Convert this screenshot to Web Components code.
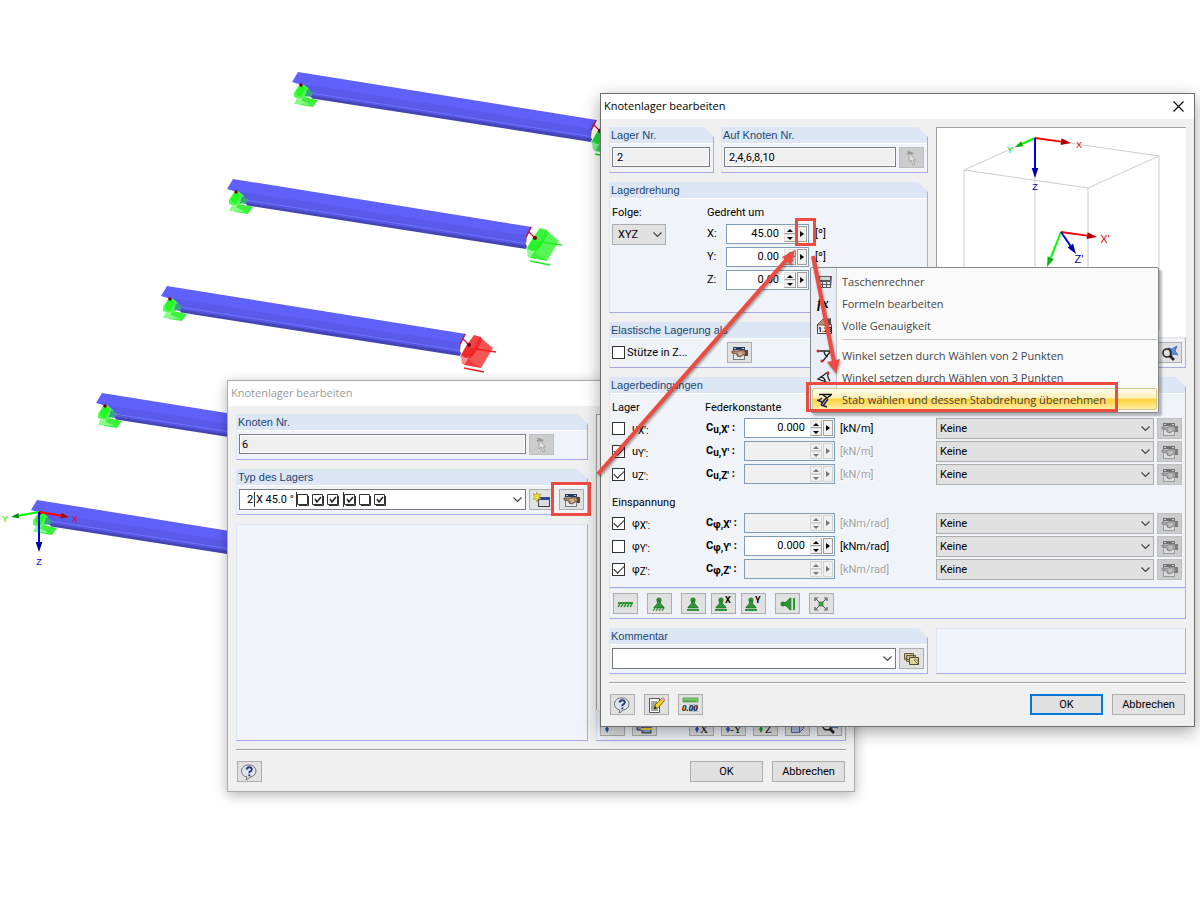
<!DOCTYPE html>
<html lang="de">
<head>
<meta charset="utf-8">
<meta name="viewport" content="width=device-width, initial-scale=1">
<title>Knotenlager bearbeiten</title>
<style>
    body {
        margin: 0;
        min-height: 100vh;
        background-color: white;
        color: black;
        font: 11px/16px Roboto, "Liberation Sans", sans-serif;
    }

    support-desktop {
        min-height: 100vh;
    }
</style>
</head>
<body>
<support-desktop></support-desktop>

<script>
const base = /*css*/`
    * {
        box-sizing: border-box;
    }

    :host([hidden]) {
        display: none;
    }

    button, input, select {
        margin: 0;
        font: inherit;
        color: inherit;
        border-radius: 0;
        outline: none;
    }

    svg {
        display: block;
    }
`

const hand = /*html*/`
    <rect x="2.5" y="2.5" width="11" height="12" fill="#e6e8ec" stroke="#777b80"/>
    <path d="M2 2h12v3H2z" fill="#273a63"/><path d="M3 3h2v1H3zM11 3h2v1h-2z" fill="#b9c6df"/>
    <path d="M1 6l6 0 3-1 4 1 1 4-3 0-3 2-3-1 0-2-5-1z" fill="#b58b66" stroke="#5c4330" stroke-width=".8"/>
    <path d="M7 8l4 0M8 10l3-1" stroke="#f1d9bf" stroke-width=".8" fill="none"/>
    <path d="M14 5h3v6h-3z" fill="#54483f"/>`

const stamp = /*html*/`
    <circle cx="8" cy="4" r="2.6" fill="#2c8a33"/>
    <path d="M7 5h2l1 3 3 3v1H3v-1l3-3z" fill="#2f9437" stroke="#1f6a27" stroke-width=".6"/>`

const beamAxis = /*html*/`<path d="M3 2.5h13M15 3l-8 6M7 3l4 3" stroke="#111" stroke-width="1.3" fill="none"/>`

const icons = {
    pick: /*html*/`
        <path d="M3 1l5 1 3 1-3 1z" fill="#777"/><path d="M4 4l4-2M5 2l5 2" stroke="#777" stroke-width="1.4"/>
        <path d="M6 3v9l2-2 2 5 2-1-2-4h3z" fill="#eee" stroke="#777" stroke-width=".8"/>`,
    hand,
    create: /*html*/`
        <rect x="5.5" y="5.5" width="11" height="9" fill="#d9dbe0" stroke="#444"/><path d="M5 5h12v3H5z" fill="#2d4b86"/>
        <path d="M4 0l1 3 3-1-2 3 2 2-3 0-1 3-1-3-3 0 2-2-2-3 3 1z" fill="#f3e52f" stroke="#8c8213" stroke-width=".5"/>`,
    help: /*html*/`
        <path d="M8 1a6.5 6 0 0 1 1 12q-1 2-4 3l1-3A6.5 6 0 0 1 8 1z" fill="#dfe5ef" stroke="#6c7076"/>
        <path d="M5.5 5.5q.5-2.500 3-2.300 2.500.2 2.300 2.300-.3 1.500-2.300 2.300v1.500" stroke="#2b3b78" stroke-width="1.9" fill="none"/>
        <circle cx="8.3" cy="11.3" r="1.1" fill="#2b3b78"/>`,
    note: /*html*/`
        <path d="M1.5 1.5h10v14h-10z" fill="#fafafa" stroke="#555"/><path d="M3 5h6M3 7h6M3 9h5M3 11h5M3 13h7" stroke="#555"/>
        <path d="M6 12l1-4 7-7 3 2-7 8z" fill="#f2d01c" stroke="#5a4a0b" stroke-width=".8"/><path d="M13 2l2-2 3 2-2 2z" fill="#e59aa8"/><path d="M6 12l1-3 2 2z" fill="#222"/>`,
    decimals: /*html*/`
        <path d="M1 1h15v4H1z" fill="#7cc870" stroke="#4f9a46" stroke-width=".8"/><path d="M3 5V3M5 5V3M7 5V3M9 5V3M11 5V3M13 5V3" stroke="#3b7b35" stroke-width=".7"/>
        <path d="M7 7h9v8H7z" fill="#b8c5de"/>
        <text x="0" y="14" font-family="Liberation Serif, serif" font-size="9" font-weight="700" font-style="italic">0.00</text>`,
    ground: /*html*/`
        <path d="M1 6h15v2H1z" fill="#2f9437"/><path d="M1 11l2-3M4 11l2-3M7 11l2-3M10 11l2-3M13 11l2-3" stroke="#2f9437" stroke-width="1.5"/>`,
    fixed: stamp + /*html*/`<path d="M2 15l2-3M5 15l2-3M8 15l2-3M11 15l2-3" stroke="#2f9437" stroke-width="1.3"/>`,
    stand: stamp + /*html*/`<path d="M2 13h12v2H2z" fill="#2f9437"/>`,
    standX: /*html*/`<g transform="translate(-2 0)">${stamp}<path d="M2 13h12v2H2z" fill="#2f9437"/></g>
        <text x="10" y="7" font-family="Roboto, sans-serif" font-size="9" font-weight="700">X</text>`,
    standY: /*html*/`<g transform="translate(-2 0)">${stamp}<path d="M2 13h12v2H2z" fill="#2f9437"/></g>
        <text x="10" y="7" font-family="Roboto, sans-serif" font-size="9" font-weight="700">Y</text>`,
    side: /*html*/`
        <circle cx="4" cy="8" r="2.5" fill="#2c8a33"/><path d="M4 7l3-1 4-4h1v12h-1l-4-4-3-1z" fill="#2f9437" stroke="#1f6a27" stroke-width=".6"/><path d="M14 2h2v12h-2z" fill="#2f9437"/>`,
    spread: /*html*/`
        <path d="M3 3l10 10M13 3L3 13" stroke="#555"/><path d="M2 5V2h3M11 2h3v3M14 11v3h-3M5 14H2v-3" stroke="#555" stroke-width="1.2" fill="none"/>
        <rect x="6" y="6" width="4" height="4" fill="#3ea446" stroke="#256c2b" stroke-width=".6"/>`,
    stack: /*html*/`
        <path d="M1.5 2.5h9v6h-9zM3.500 4.500h9v6h-9z" fill="#c9be8a" stroke="#665f3d"/><path d="M6.5 6.5h9v7h-9z" fill="#dfd49c" stroke="#554f32"/>
        <path d="M11 9h4v4z" fill="#fff8d5" stroke="#554f32" stroke-width=".7"/>`,
    find: /*html*/`
        <path d="M7 3l4 1 5-3-2 5 3 4-4-1-4 3 0-5z" fill="#5f8de0" stroke="#2a4da0" stroke-width=".7"/>
        <circle cx="6" cy="8" r="4" fill="none" stroke="#222" stroke-width="1.6"/><path d="M9 11l4 4" stroke="#222" stroke-width="2.6"/>`,
    calc: /*html*/`
        <path d="M2 2h14l-1 12H1z" fill="#575b60"/><rect x="4" y="3" width="10" height="3" fill="#cfd8cf"/>
        <path d="M3 8h3v2H3zM7 8h3v2H7zM11 8h3v2h-3zM3 11h3v2H3zM7 11h3v2H7zM11 11h3v2h-3z" fill="#e8e8e8"/>`,
    fx: /*html*/`<text x="1" y="12" font-family="Liberation Serif, serif" font-size="14" font-weight="700" font-style="italic">fx</text>`,
    exact: /*html*/`
        <path d="M1.5 6.5h14v9h-14z" fill="#f4f4f4" stroke="#444"/><path d="M1 7l6-6 5 0 3 3-3 4-5-1z" fill="#b79673" stroke="#4a3c2e" stroke-width=".7"/><path d="M11 1l4-1v6l-3 0z" fill="#4e5665"/>
        <text x="2" y="14" font-family="Roboto, sans-serif" font-size="7" font-weight="700">1.23</text>`,
    two: /*html*/`<path d="M2 3h14M14 4l-7 9M8 4q1 4 4 4" stroke="#222" stroke-width="1.3" fill="none"/><circle cx="2" cy="3" r="1.5" fill="#d22"/><circle cx="6" cy="13" r="1.5" fill="#d22"/>`,
    three: /*html*/`<path d="M12 2L2 9l11 4M5 7q4 1 4 4M12 3q-1 4 2 8" stroke="#222" stroke-width="1.3" fill="none"/><circle cx="12" cy="3" r="1.5" fill="#d22"/><circle cx="13" cy="13" r="1.5" fill="#d22"/>`,
    member: beamAxis + /*html*/`<path d="M1 8l5 2M7 14l5-7M5 13l6 2M5 13l4-6M2 9l4-3" stroke="#16246f" stroke-width="1.5" fill="none"/>`,
    axisX: /*html*/`<path d="M4 8l2 3-2 4-2-4z" fill="#3355cc"/><text x="7" y="15" font-family="Liberation Serif, serif" font-size="11">X</text>`,
    axisY: /*html*/`<path d="M3 8l2 3-2 4-2-4z" fill="#3355cc"/><text x="5" y="15" font-family="Liberation Serif, serif" font-size="11">-Y</text>`,
    axisZ: /*html*/`<path d="M4 8l2 3-2 4-2-4z" fill="#229922"/><text x="8" y="15" font-family="Liberation Serif, serif" font-size="11">Z</text>`,
    drop: /*html*/`<path d="M3 8l2 3-2 4-2-4z" fill="#3355aa"/>`,
    views: /*html*/`<path d="M1 6h8v6H1z" fill="#8ca0d8" stroke="#334"/><path d="M6 9h9v6H6z" fill="#8ca0d8" stroke="#334"/><path d="M5 10h11v2H5z" fill="#f0e020"/>`,
    cube: /*html*/`<path d="M2.5 6.5h8v8h-8zM2.500 6.500l4-4h8v8l-4 4M10.500 6.500l4-4" fill="#b9c4e8" stroke="#5566a0"/>`
}

const icon = (name) => /*html*/`<svg width="17" height="16" viewBox="0 0 17 16" aria-hidden="true">${icons[name]}</svg>`

class BaseElement extends HTMLElement {
    connectedCallback() {
        if (this.shadowRoot) return

        this.attachShadow({ mode: 'open' })
        this.shadowRoot.innerHTML = /*html*/`<style>${base}${this.styles()}</style>${this.render()}`
    }
}

class IconButton extends BaseElement {
    styles() {
        return /*css*/`
            :host {
                display: block;
                width: 25px;
                height: 21px;
            }

            button {
                width: 100%;
                height: 100%;
                padding: 0;
                display: grid;
                place-items: center;
                background-color: #e1e1e1;
                border: 1px solid #adadad;
            }

            button:disabled {
                background-color: #cccccc;
                border-color: #bfbfbf;
            }

            button:disabled svg {
                filter: grayscale(1);
                opacity: 0.6;
            }
        `
    }

    render() {
        return /*html*/`<button type="button" aria-label="${this.getAttribute('label')}" ${this.hasAttribute('disabled') ? 'disabled' : ''}>${icon(this.getAttribute('icon'))}</button>`
    }
}

class PushButton extends BaseElement {
    styles() {
        return /*css*/`
            :host {
                display: block;
                width: 73px;
                height: 21px;
            }

            button {
                width: 100%;
                height: 100%;
                padding: 0;
                background-color: #e1e1e1;
                border: 1px solid #adadad;
            }

            :host([primary]) button {
                border: 2px solid #0078d7;
            }
        `
    }

    render() {
        return /*html*/`<button type="button"><slot></slot></button>`
    }
}

class CheckBox extends BaseElement {
    styles() {
        return /*css*/`
            :host {
                display: flex;
            }

            label {
                display: flex;
                align-items: center;
                gap: 2px;
                white-space: nowrap;
            }

            :host([wide]) label {
                gap: 7px;
            }

            input {
                appearance: none;
                flex: none;
                width: 13px;
                height: 13px;
                border: 1px solid #333;
                background-color: white;
                display: grid;
                place-items: center;
            }

            input:checked::before {
                content: '';
                width: 9px;
                height: 5px;
                margin-bottom: 3px;
                border-left: 1px solid #222;
                border-bottom: 1px solid #222;
                transform: rotate(-45deg);
            }
        `
    }

    render() {
        return /*html*/`<label><input type="checkbox" ${this.hasAttribute('checked') ? 'checked' : ''}><span><slot></slot></span></label>`
    }
}

class TextField extends BaseElement {
    styles() {
        return /*css*/`
            :host {
                display: block;
                min-width: 0;
            }

            input {
                display: block;
                width: 100%;
                height: 20px;
                padding: 0 4px;
                background-color: #f0f0f0;
                border: 1px solid #7a7a7a;
                box-shadow: inset 0 0 0 1px white;
            }

            :host([tight]) input {
                padding: 0 2px;
            }
        `
    }

    render() {
        return /*html*/`<input type="text" readonly aria-label="${this.getAttribute('label')}" value="${this.getAttribute('value')}">`
    }
}

class DropDown extends BaseElement {
    styles() {
        return /*css*/`
            :host {
                display: block;
                position: relative;
                min-width: 0;
            }

            select {
                appearance: none;
                display: block;
                width: 100%;
                height: 21px;
                padding: 0 18px 0 3px;
                background-color: #e1e1e1;
                border: 1px solid #adadad;
            }

            :host([editable]) select {
                background-color: white;
                border-color: #7a7a7a;
                padding-left: 7px;
            }

            :host([small]) select {
                padding-left: 5px;
            }

            svg {
                position: absolute;
                right: 4px;
                top: 8px;
                pointer-events: none;
            }
        `
    }

    render() {
        return /*html*/`
            <select aria-label="${this.getAttribute('label')}"><option>${this.getAttribute('value') || ''}</option></select>
            <svg width="9" height="6" viewBox="0 0 9 6"><path d="M.5.5l4 4 4-4" fill="none" stroke="#444" stroke-width="1.200"/></svg>
            <slot></slot>
        `
    }
}

// number box with up/down arrows and the small menu arrow beside them
class SpinField extends BaseElement {
    styles() {
        return /*css*/`
            :host {
                display: flex;
                align-items: center;
            }

            label {
                flex: none;
                width: var(--label-width, 19px);
                font-weight: var(--label-weight, 400);
                white-space: nowrap;
            }

            .box {
                flex: 1;
                display: flex;
                gap: 1px;
                height: 20px;
                min-width: 0;
                padding: 1px;
                background-color: white;
                border: 1px solid #7f9db9;
            }

            input {
                flex: 1;
                width: 0;
                padding: 0 4px 0 0;
                border: none;
                background: none;
                text-align: right;
            }

            .steps {
                width: 12px;
                display: flex;
                flex-direction: column;
            }

            button {
                flex: 1;
                padding: 0;
                display: grid;
                place-items: center;
                background-color: #f0f0f0;
                border: 1px solid #a0a0a0;
                border-top-color: #e3e3e3;
                border-left-color: #e3e3e3;
            }

            .more {
                flex: none;
                width: 10px;
                border-color: #a0a0a0;
            }

            :host([disabled]) .box {
                background-color: #f0f0f0;
            }

            :host([disabled]) button {
                border-color: #d4d4d4;
                color: #777;
            }
        `
    }

    render() {
        const off = this.hasAttribute('disabled') ? 'disabled' : ''

        return /*html*/`
            <label for="value"><slot></slot></label>
            <div class="box">
                <input id="value" type="text" value="${this.getAttribute('value') || ''}" ${off}>
                <div class="steps">
                    <button type="button" aria-label="Erhöhen" ${off}><svg width="6" height="3" viewBox="0 0 6 3"><path d="M0 3l3-3 3 3z" fill="currentColor"/></svg></button>
                    <button type="button" aria-label="Verringern" ${off}><svg width="6" height="3" viewBox="0 0 6 3"><path d="M0 0l3 3 3-3z" fill="currentColor"/></svg></button>
                </div>
                <button class="more" type="button" aria-label="Mehr" ${off}><svg width="4" height="6" viewBox="0 0 4 6"><path d="M0 0l4 3-4 3z" fill="currentColor"/></svg></button>
            </div>
        `
    }
}

// framed group, with a heading its upper right corner is cut off
class GroupPanel extends BaseElement {
    styles() {
        return /*css*/`
            :host {
                display: block;
                background-color: #f0f4f9;
                border: 1px solid #dce6f4;
                border-right-color: #a8a8ec;
                border-bottom-color: #a8a8ec;
            }

            :host([heading]) {
                clip-path: polygon(0 0, calc(100% - 10px) 0, 100% 10px, 100% 100%, 0 100%);
            }

            h2 {
                margin: 0;
                height: 16px;
                padding: 0 1px;
                background-color: #dce6f4;
                border-bottom: 1px solid white;
                color: #1d4770;
                font: 11px/14px "Liberation Sans", Arial, sans-serif;
            }

            div {
                padding: 3px 3px 4px 2px;
            }
        `
    }

    render() {
        const heading = this.getAttribute('heading')
        return /*html*/`${heading ? `<h2>${heading}</h2>` : ''}<div><slot></slot></div>`
    }
}

class DialogWindow extends BaseElement {
    styles() {
        return /*css*/`
            :host {
                display: block;
                background-color: #f0f0f0;
                border: 1px solid #6e6e6e;
                box-shadow: 0 5px 16px rgba(0, 0, 0, 0.35);
            }

            :host([inactive]) {
                border-color: #aaa;
                box-shadow: 0 3px 12px rgba(0, 0, 0, 0.3);
            }

            header {
                display: flex;
                justify-content: space-between;
                align-items: center;
                height: 25px;
                padding: 0 10px 1px 3px;
                background-color: white;
            }

            h1 {
                margin: 0;
                font: 11px/16px "Open Sans", "Noto Sans", sans-serif;
            }

            :host([inactive]) h1 {
                color: #999;
            }

            header button {
                padding: 0;
                border: none;
                background: none;
            }

            main {
                padding: 8px;
            }

            footer {
                margin: 0 8px;
                padding: 11px 1px;
                border-top: 1px solid #a0a0a0;
                box-shadow: inset 0 1px white;
                display: flex;
                justify-content: space-between;
            }

            :host([inactive]) footer {
                padding-bottom: 9px;
            }

            footer div {
                display: flex;
                gap: 9px;
            }
        `
    }

    render() {
        return /*html*/`
            <header>
                <h1>${this.getAttribute('heading')}</h1>
                <button type="button" aria-label="Schließen"><svg width="11" height="11" viewBox="0 0 11 11"><path d="M.5.5l10 10M10.500.5l-10 10" stroke="black" stroke-width="1.1"/></svg></button>
            </header>
            <main><slot></slot></main>
            <footer>
                <div><slot name="tools"></slot></div>
                <div>
                    <push-button ${this.hasAttribute('inactive') ? '' : 'primary'}>OK</push-button>
                    <push-button>Abbrechen</push-button>
                </div>
            </footer>
        `
    }
}

const arrow = (x1, y1, x2, y2, color, tip, size = 10) => {
    const a = Math.atan2(y2 - y1, x2 - x1)
    const bx = x2 - Math.cos(a) * size
    const by = y2 - Math.sin(a) * size
    const dx = Math.sin(a) * size / 3
    const dy = Math.cos(a) * size / 3

    return /*html*/`
        <line x1="${x1}" y1="${y1}" x2="${bx}" y2="${by}" stroke="${color}" stroke-width="2"/>
        <polygon points="${x2},${y2} ${bx + dx},${by - dy} ${bx - dx},${by + dy}" fill="${tip}"/>
    `
}

const axisText = (x, y, color, text, size = 9) => /*html*/`<text x="${x}" y="${y}" fill="${color}" font-family="Liberation Sans, sans-serif" font-size="${size}" text-anchor="middle">${text}</text>`

class AxisPreview extends BaseElement {
    styles() {
        return /*css*/`
            :host {
                display: block;
                min-height: 0;
                background-color: white;
                border-top: 1px solid #a0a0a0;
                border-left: 1px solid #a0a0a0;
            }

            svg {
                margin: -1px;
                width: 250px;
                height: 210px;
            }
        `
    }

    render() {
        return /*html*/`
            <svg viewBox="0 0 250 210" aria-hidden="true">
                <path d="M28 43L99 11 223 29 152 61zM28 43v160M99 11v192M223 29v174M152 61v142" fill="none" stroke="#ccc"/>
                ${arrow(99, 11, 135, 16, '#f00', '#b00000')}
                ${arrow(99, 11, 79, 20, '#0f0', '#00a800', 8)}
                ${arrow(99, 11, 99, 51, '#00f', '#0000a8')}
                ${arrow(125, 105, 161, 110, '#f00', '#b00000')}
                ${arrow(125, 105, 111, 140, '#0f0', '#00b800')}
                ${arrow(125, 105, 140, 127, '#00f', '#0000a8')}
                ${axisText(143, 21, '#d00', 'X')}
                ${axisText(74, 26, '#0d0', 'Y')}
                ${axisText(99, 63, '#00a', 'Z')}
                ${axisText(169, 116, '#d00', "X'", 11)}
                ${axisText(143, 136, '#00a', "Z'", 11)}
            </svg>
        `
    }
}

class SupportRow extends BaseElement {
    styles() {
        return /*css*/`
            :host {
                display: grid;
                grid-template-columns: 94px 129px 97px 1fr 25px;
                align-items: center;
                height: 21px;
            }

            spin-field {
                --label-width: 38px;
                --label-weight: 700;
                height: 20px;
                align-self: start;
            }

            sub {
                font-size: 10px;
                line-height: 10px;
                vertical-align: -2px;
            }

            .unit {
                padding-left: 5px;
            }

            .off {
                color: #a0a0a0;
                text-shadow: 1px 1px white;
            }

            drop-down {
                margin: 0 3px 0 4px;
            }
        `
    }

    render() {
        const symbol = this.getAttribute('symbol')
        const axis = this.getAttribute('axis')
        const value = this.getAttribute('value')

        return /*html*/`
            <check-box wide ${this.hasAttribute('checked') ? 'checked' : ''}>${symbol}<sub>${axis}':</sub></check-box>
            <spin-field ${value ? `value="${value}"` : 'disabled'}>C<sub>${symbol},${axis}'</sub> :</spin-field>
            <span class="unit ${value ? '' : 'off'}">[${this.getAttribute('unit')}]</span>
            <drop-down label="Nichtlinearität ${symbol}${axis}'" value="Keine"></drop-down>
            <icon-button icon="hand" label="Nichtlinearität bearbeiten" disabled></icon-button>
        `
    }
}

class ContextMenu extends BaseElement {
    styles() {
        return /*css*/`
            :host {
                display: block;
                padding: 2px 1px;
                border: 1px solid #868686;
                border-radius: 2px;
                background: linear-gradient(90deg, #e9eef7 25px, #c5c5c5 25px 26px, #fafafa 26px);
                box-shadow: 3px 3px 2px rgba(0, 0, 0, 0.25);
                color: #444;
                font: 11px/20px "Open Sans", "Noto Sans", sans-serif;
            }

            button {
                display: flex;
                align-items: center;
                gap: 9px;
                width: 100%;
                height: 22px;
                padding: 1px 3px 0;
                border: 1px solid transparent;
                background: none;
                white-space: nowrap;
            }

            .active {
                border-color: #d2c48a;
                border-radius: 2px;
                background: linear-gradient(#fffcee, #fdefb6 45%, #fdd340 52%, #fee073 80%, #fff0a8);
            }

            hr {
                margin: 3px 0 4px 31px;
                border: none;
                border-top: 1px solid #c5c5c5;
            }
        `
    }

    render() {
        const item = ([name, text], active) => /*html*/`<button type="button" role="menuitem" class="${active ? 'active' : ''}">${icon(name)}${text}</button>`

        return /*html*/`
            ${item(['calc', 'Taschenrechner'])}
            ${item(['fx', 'Formeln bearbeiten'])}
            ${item(['exact', 'Volle Genauigkeit'])}
            <hr>
            ${item(['two', 'Winkel setzen durch Wählen von 2 Punkten'])}
            ${item(['three', 'Winkel setzen durch Wählen von 3 Punkten'])}
            ${item(['member', 'Stab wählen und dessen Stabdrehung übernehmen'], true)}
        `
    }
}

class BeamScene extends BaseElement {
    styles() {
        return /*css*/`
            :host {
                display: block;
            }

            svg {
                width: 100%;
            }
        `
    }

    endSupport(color) {
        return /*html*/`
            <g fill="${color}">
                <path d="M307 49l7 2 1 4-9 15-7 2-5-3 5-9z" opacity=".85"/>
                <path d="M313 51l13 11-12 20-17-3 12-19z" opacity=".75"/>
                <path d="M299 61l10 2-6 10-10-2z" opacity=".6"/>
                <path d="M294 71l7 2 13 9-19-4z" opacity=".5"/>
            </g>
            <path d="M309 63l20 3M297 82l20 4" stroke="${color}" stroke-width="1.300"/>
            <path d="M298 48l-5 10M296 53l6 6" stroke="#c8102e" stroke-width="1.200"/>
            <circle cx="302" cy="59" r="2" fill="#7a0010"/>
        `
    }

    beam(x, y, color) {
        return /*html*/`
            <g transform="translate(${x} ${y})">
                <path d="M0 30l6-5 14 3-5 7-13-2z" fill="#3cf03c"/>
                <path d="M-1 26l13 7-16-1z" fill="#86fb86"/>
                <path d="M0 0L299 48 294 58 4 13-6 10z" fill="#6060fa"/>
                <path d="M4 12L294 57 293 65 11 21z" fill="#5959ea"/>
                <path d="M9 20L293 64 293 66 9 22z" fill="#7373fb"/>
                <path d="M9 21L293 65 294 68 12 24z" fill="#5555e4"/>
                <path d="M12 23.500L294 67 293 70 14 26.500z" fill="#4444b4"/>
                <path d="M1 13l4-1 6 5 1 4-4 4-6 2-6-2 0-4z" fill="#50fa50"/>
                <path d="M3 13l5 3-5 9-4-2-1-4z" fill="#22f822"/>
                <path d="M9 17l6 3-2 5-6-1z" fill="#3aa08a"/>
                <circle cx="3" cy="13" r="1.800" fill="#7a0010"/>
                ${this.endSupport(color)}
            </g>
        `
    }

    render() {
        return /*html*/`
            <svg viewBox="0 0 1200 900" aria-hidden="true">
                ${this.beam(298, 72, '#11d92a')}
                ${this.beam(233, 179, '#1df21d')}
                ${this.beam(167, 286, '#f01e1e')}
                ${this.beam(102, 393, '#1df21d')}
                ${this.beam(37, 500, '#1df21d')}
                ${arrow(39, 512, 69, 517, '#f00', '#b00000', 8)}
                ${arrow(39, 512, 11, 517, '#0f0', '#009000', 8)}
                ${arrow(39, 512, 39, 552, '#00f', '#0000a8')}
                ${axisText(75, 522, '#e00030', 'X')}
                ${axisText(5, 522, '#0e0', 'Y')}
                ${axisText(39, 565, '#00f', 'Z')}
            </svg>
        `
    }
}

// red frames and arrows over the dialogs
class MarkLayer extends BaseElement {
    styles() {
        return /*css*/`
            :host {
                display: block;
                pointer-events: none;
            }

            svg {
                width: 100%;
            }

            .arrows {
                filter: drop-shadow(1px 2px 1px rgba(0, 0, 0, 0.35));
            }
        `
    }

    render() {
        return /*html*/`
            <svg viewBox="0 0 1200 900" aria-hidden="true">
                <g fill="none" stroke="#ec4b42" stroke-width="3">
                    <rect x="796.5" y="219.5" width="18" height="25"/>
                    <rect x="807.5" y="383.5" width="309" height="27"/>
                    <rect x="552.5" y="483.5" width="37" height="31"/>
                </g>
                <g class="arrows">
                    <path d="M598 474L787 259M813 256L834 362" stroke="#ec4b42" stroke-width="4"/>
                    <path d="M795 250l-4 15-9-8zM836 373l-9-11 13-3z" fill="#ec4b42"/>
                </g>
            </svg>
        `
    }
}

class SupportDesktop extends BaseElement {
    styles() {
        return /*css*/`
            :host {
                display: block;
                position: relative;
                overflow: hidden;
            }

            dialog-window, context-menu, mark-layer {
                position: absolute;
            }

            .node {
                top: 380px;
                left: 19%;
                right: 345px;
                margin-left: -1px;
            }

            .support {
                top: 93px;
                left: 50%;
                right: 5px;
            }

            context-menu {
                top: 267px;
                left: 67.5%;
                right: 41px;
            }

            mark-layer {
                inset: 0;
            }

            .columns {
                display: grid;
                grid-template-columns: 319fr 250fr;
                gap: 9px 8px;
            }

            .node .columns {
                grid-template-columns: 352fr 250fr;
            }

            .column {
                display: flex;
                flex-direction: column;
                gap: 9px;
                min-width: 0;
            }

            .column.joined {
                gap: 0;
            }

            .grow {
                flex: 1;
            }

            .line {
                display: flex;
                align-items: flex-start;
                gap: 3px;
            }

            .line.spaced {
                align-items: stretch;
                gap: 7px;
            }

            .narrow {
                width: 105px;
            }

            .rotation {
                display: grid;
                grid-template-columns: 95px 1fr;
                padding-top: 3px;
                min-height: 106px;
                align-items: start;
                align-content: start;
            }

            .rotation drop-down {
                width: 54px;
            }

            .bracket, .rows {
                display: grid;
                gap: 3px;
            }

            .angle {
                display: grid;
                grid-template-columns: 102px 1fr;
                align-items: center;
                gap: 6px;
            }

            .elastic {
                display: grid;
                grid-template-columns: 115px 25px;
                align-items: center;
                height: 21px;
            }

            .heads {
                display: grid;
                grid-template-columns: 93px 1fr;
                padding: 3px 0 2px;
            }

            .bearing {
                display: grid;
                gap: 2px;
            }

            .second {
                padding-top: 10px;
            }

            .last {
                padding-bottom: 3px;
            }

            .full {
                grid-column: 1 / -1;
            }

            .toolbar {
                display: flex;
                gap: 9px;
                padding: 1px 1px 0;
            }

            .toolbar div {
                display: flex;
                gap: 5px;
            }

            .views {
                display: flex;
                justify-content: space-between;
                padding: 1px 0 0 1px;
            }

            .views div {
                display: flex;
                gap: 5px;
            }

            .info {
                min-height: 217px;
            }

            .parts {
                position: absolute;
                left: 15px;
                top: 3px;
            }

            .node icon-button + icon-button {
                margin-left: 2px;
            }

            .trail {
                padding-right: 30px;
            }
        `
    }

    render() {
        const tick = (x) => /*html*/`<path d="M${x}.5 2.500h10v10h-10z" fill="white" stroke="#333"/><path d="M${x + 3} 7l2 3 4-5" fill="none" stroke="#222" stroke-width="1.500"/><path d="M${x + 2} 13.500h9.500V4" fill="none" stroke="#333"/>`
        const empty = (x) => /*html*/`<path d="M${x}.5 2.500h10v10h-10z" fill="white" stroke="#333"/><path d="M${x + 2} 13.500h9.500V4" fill="none" stroke="#333"/>`

        return /*html*/`
            <beam-scene></beam-scene>

            <dialog-window class="node" heading="Knotenlager bearbeiten" inactive>
                <div class="columns">
                    <div class="column">
                        <group-panel heading="Knoten Nr.">
                            <div class="line trail">
                                <text-field class="grow" tight label="Knoten Nr." value="6"></text-field>
                                <icon-button icon="pick" label="Knoten wählen" disabled></icon-button>
                            </div>
                        </group-panel>
                        <group-panel heading="Typ des Lagers">
                            <div class="line">
                                <drop-down class="grow" editable label="Typ des Lagers" value="2 X 45.0 °">
                                    <svg class="parts" width="134" height="15" viewBox="0 0 134 15">
                                        <path d="M.5 0v15M42.500 0v15M89.500 0v15" stroke="#333"/>
                                        ${empty(43)}${tick(58)}${tick(73)}${tick(90)}${empty(105)}${tick(120)}
                                    </svg>
                                </drop-down>
                                <icon-button icon="create" label="Neu"></icon-button>
                                <icon-button icon="hand" label="Bearbeiten"></icon-button>
                            </div>
                        </group-panel>
                        <group-panel class="info"></group-panel>
                    </div>
                    <div class="column joined">
                        <axis-preview class="grow"></axis-preview>
                        <group-panel>
                            <div class="views">
                                <div><icon-button icon="drop" label="Anzeige"></icon-button><icon-button icon="views" label="Ansichten"></icon-button></div>
                                <div>
                                    <icon-button icon="axisX" label="Ansicht X"></icon-button>
                                    <icon-button icon="axisY" label="Ansicht -Y"></icon-button>
                                    <icon-button icon="axisZ" label="Ansicht Z"></icon-button>
                                    <icon-button icon="cube" label="Isometrie"></icon-button>
                                    <icon-button icon="find" label="Zoom"></icon-button>
                                </div>
                            </div>
                        </group-panel>
                    </div>
                </div>
                <icon-button slot="tools" icon="help" label="Hilfe"></icon-button>
            </dialog-window>

            <dialog-window class="support" heading="Knotenlager bearbeiten">
                <div class="columns">
                    <div class="column">
                        <div class="line spaced">
                            <group-panel class="narrow" heading="Lager Nr.">
                                <text-field label="Lager Nr." value="2"></text-field>
                            </group-panel>
                            <group-panel class="grow" heading="Auf Knoten Nr.">
                                <div class="line">
                                    <text-field class="grow" label="Auf Knoten Nr." value="2,4,6,8,10"></text-field>
                                    <icon-button icon="pick" label="Knoten wählen" disabled></icon-button>
                                </div>
                            </group-panel>
                        </div>
                        <group-panel heading="Lagerdrehung">
                            <div class="rotation">
                                <div class="bracket">
                                    <span>Folge:</span>
                                    <drop-down small label="Folge" value="XYZ"></drop-down>
                                </div>
                                <div class="rows">
                                    <span>Gedreht um</span>
                                    <div class="angle"><spin-field value="45.00">X:</spin-field><span>[º]</span></div>
                                    <div class="angle"><spin-field value="0.00">Y:</spin-field><span>[º]</span></div>
                                    <div class="angle"><spin-field value="0.00">Z:</spin-field><span>[º]</span></div>
                                </div>
                            </div>
                        </group-panel>
                        <group-panel heading="Elastische Lagerung als">
                            <div class="elastic">
                                <check-box>Stütze in Z...</check-box>
                                <icon-button icon="hand" label="Stütze bearbeiten"></icon-button>
                            </div>
                        </group-panel>
                    </div>
                    <div class="column joined">
                        <axis-preview class="grow"></axis-preview>
                        <group-panel>
                            <div class="views"><span></span><icon-button icon="find" label="Ansicht"></icon-button></div>
                        </group-panel>
                    </div>
                    <div class="full">
                        <group-panel heading="Lagerbedingungen">
                            <div class="heads"><span>Lager</span><span>Federkonstante</span></div>
                            <div class="bearing">
                                <support-row symbol="u" axis="X" value="0.000" unit="kN/m"></support-row>
                                <support-row symbol="u" axis="Y" checked unit="kN/m"></support-row>
                                <support-row symbol="u" axis="Z" checked unit="kN/m"></support-row>
                            </div>
                            <div class="heads second"><span>Einspannung</span></div>
                            <div class="bearing last">
                                <support-row symbol="φ" axis="X" checked unit="kNm/rad"></support-row>
                                <support-row symbol="φ" axis="Y" value="0.000" unit="kNm/rad"></support-row>
                                <support-row symbol="φ" axis="Z" checked unit="kNm/rad"></support-row>
                            </div>
                        </group-panel>
                        <group-panel>
                            <div class="toolbar">
                                <icon-button icon="ground" label="Eingespannt"></icon-button>
                                <icon-button icon="fixed" label="Fest"></icon-button>
                                <div>
                                    <icon-button icon="stand" label="Gelenkig"></icon-button>
                                    <icon-button icon="standX" label="Verschieblich in X"></icon-button>
                                    <icon-button icon="standY" label="Verschieblich in Y"></icon-button>
                                </div>
                                <icon-button icon="side" label="Seitlich"></icon-button>
                                <icon-button icon="spread" label="Frei"></icon-button>
                            </div>
                        </group-panel>
                    </div>
                    <group-panel heading="Kommentar">
                        <div class="line">
                            <drop-down class="grow" editable label="Kommentar"></drop-down>
                            <icon-button icon="stack" label="Kommentare"></icon-button>
                        </div>
                    </group-panel>
                    <group-panel></group-panel>
                </div>
                <icon-button slot="tools" icon="help" label="Hilfe"></icon-button>
                <icon-button slot="tools" icon="note" label="Notiz"></icon-button>
                <icon-button slot="tools" icon="decimals" label="Einheiten und Dezimalstellen"></icon-button>
            </dialog-window>

            <context-menu role="menu"></context-menu>
            <mark-layer></mark-layer>
        `
    }
}

customElements.define('icon-button', IconButton)
customElements.define('push-button', PushButton)
customElements.define('check-box', CheckBox)
customElements.define('text-field', TextField)
customElements.define('drop-down', DropDown)
customElements.define('spin-field', SpinField)
customElements.define('group-panel', GroupPanel)
customElements.define('axis-preview', AxisPreview)
customElements.define('support-row', SupportRow)
customElements.define('dialog-window', DialogWindow)
customElements.define('context-menu', ContextMenu)
customElements.define('beam-scene', BeamScene)
customElements.define('mark-layer', MarkLayer)
customElements.define('support-desktop', SupportDesktop)
</script>
</body>
</html>
